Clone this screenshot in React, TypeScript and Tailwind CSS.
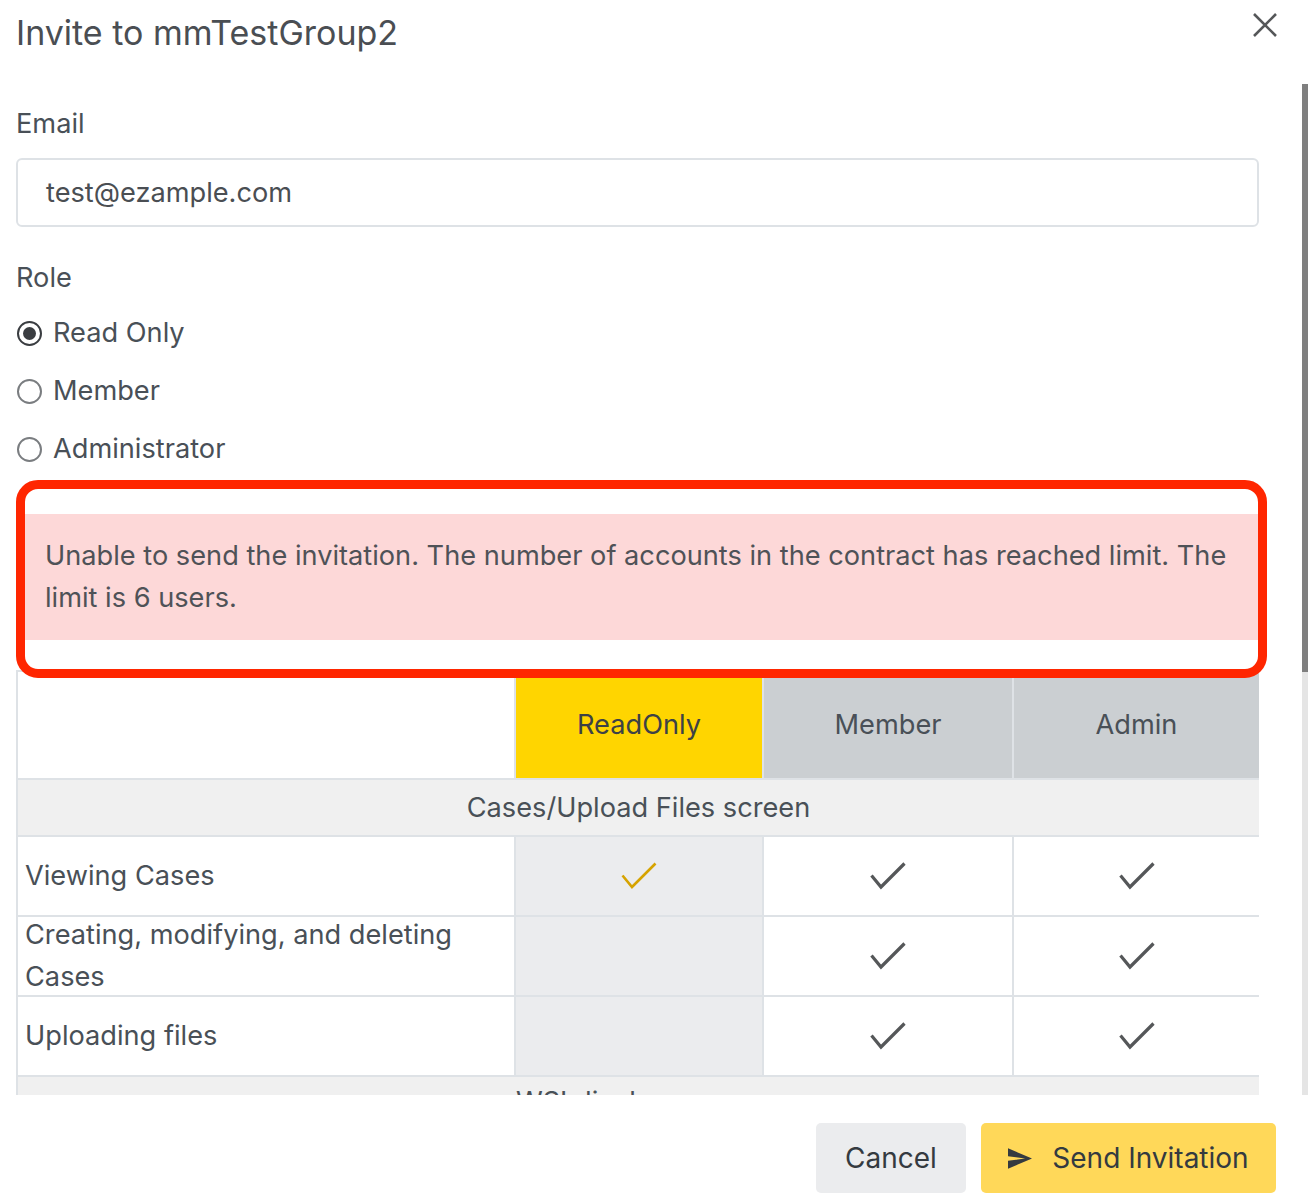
import React from "react";

const roles = [
  { label: "Read Only", checked: true },
  { label: "Member", checked: false },
  { label: "Administrator", checked: false },
];

const rows = [
  { name: ["Creating, modifying, and deleting", "Cases"], ro: false },
];

function Check({ yellow = false }: { yellow?: boolean }) {
  return (
    <svg width="36" height="28" viewBox="0 0 36 28" className="mx-auto block">
      <polyline
        points="1.5,13.5 11,25 34.5,1.5"
        fill="none"
        stroke={yellow ? "#d6a300" : "#555759"}
        strokeWidth={yellow ? 2.6 : 3.2}
      />
    </svg>
  );
}

function Radio({ checked }: { checked: boolean }) {
  return (
    <span
      className={
        "flex h-[25px] w-[25px] items-center justify-center rounded-full border-2 bg-white " +
        (checked ? "border-[#3a3d41]" : "border-[#7a7d80]")
      }
    >
      {checked && <span className="h-[13px] w-[13px] rounded-full bg-[#3a3d41]" />}
    </span>
  );
}

function PermRow({ label, ro }: { label: React.ReactNode; ro: boolean }) {
  return (
    <tr className="h-[80px]">
      <td className="border-2 border-[#dee2e6] p-0 px-[7px] align-middle">
        <div className="-my-[4px] leading-[42px]">{label}</div>
      </td>
      <td className="border-2 border-[#dee2e6] bg-[#ebecee] p-0 align-middle">{ro && <Check yellow />}</td>
      <td className="border-2 border-[#dee2e6] p-0 align-middle"><Check /></td>
      <td className="border-2 border-[#dee2e6] p-0 align-middle"><Check /></td>
    </tr>
  );
}

export default function App() {
  return (
    <div className="relative flex h-[1204px] w-[1308px] flex-col overflow-hidden bg-white font-['Inter',sans-serif] text-[#495057]">
      {/* header */}
      <header className="flex h-[84px] shrink-0 items-start justify-between pl-[16px] pr-[31px]">
        <h1 className="pt-[13px] text-[34px] leading-[40px] font-normal text-[#4a4e53]">Invite to mmTestGroup2</h1>
        <button className="mt-[13px] text-[#555759]" aria-label="Close">
          <svg width="24" height="24" viewBox="0 0 24 24">
            <path d="M1 1 23 23M23 1 1 23" stroke="currentColor" strokeWidth="2.6" fill="none" />
          </svg>
        </button>
      </header>

      {/* scrolling body */}
      <div className="flex h-[1011px] shrink-0">
        <div className="ml-[16px] w-[1243px] overflow-hidden pt-[19px] text-[27.2px] leading-[42px]">
          <div className="mb-[13px]">Email</div>
          <div className="flex h-[69px] items-center rounded-[6px] border-2 border-[#dee2e6] px-[28px] text-[#4a4e53]">
            test@ezample.com
          </div>

          <div className="mt-[30px] mb-[5px]">Role</div>
          {roles.map((r) => (
            <label key={r.label} className="flex h-[58px] items-center gap-[11px] pl-[1px]">
              <Radio checked={r.checked} />
              <span>{r.label}</span>
            </label>
          ))}

          <div className="mt-[36px] whitespace-nowrap bg-[#fdd8d8] px-[29px] py-[21px] text-[#4f5257]">
            Unable to send the invitation. The number of accounts in the contract has reached limit. The
            <br />
            limit is 6 users.
          </div>

          <table className="mt-[30px] w-full table-fixed border-collapse">
            <colgroup>
              <col className="w-[498px]" />
              <col className="w-[248px]" />
              <col className="w-[250px]" />
              <col className="w-[247px]" />
            </colgroup>
            <thead>
              <tr className="h-[108px] text-center">
                <th className="border-2 border-[#dee2e6] p-0 font-normal" />
                <th className="border-2 border-[#dee2e6] bg-[#ffd500] p-0 font-normal text-[#3d4146]">ReadOnly</th>
                <th className="border-2 border-[#dee2e6] bg-[#cbcfd2] p-0 font-normal">Member</th>
                <th className="border-2 border-[#dee2e6] bg-[#cbcfd2] p-0 font-normal">Admin</th>
              </tr>
            </thead>
            <tbody>
              <tr className="h-[57px] bg-[#f0f0f0] text-center">
                <td colSpan={4} className="border-2 border-[#dee2e6] p-0">Cases/Upload Files screen</td>
              </tr>
              <PermRow label="Viewing Cases" ro />
              {rows.map((r) => (
                <PermRow key={r.name[0]} label={<>{r.name[0]}<br />{r.name[1]}</>} ro={r.ro} />
              ))}
              <PermRow label="Uploading files" ro={false} />
              <tr className="h-[57px] bg-[#f0f0f0] text-center">
                <td colSpan={4} className="border-2 border-[#dee2e6] p-0 pt-[4px] align-top">WSI display screen</td>
              </tr>
            </tbody>
          </table>
        </div>
        <div className="flex-1" />
        <div className="flex w-[6px] flex-col bg-[#e5e5e5]">
          <div className="h-[588px] bg-[#7f7f7f]" />
        </div>
      </div>

      {/* footer */}
      <footer className="flex flex-1 items-start justify-end gap-[15px] pr-[32px] pt-[28px] text-[28px]">
        <button className="flex h-[70px] w-[150px] items-center justify-center rounded-[5px] bg-[#ebecee] text-[#343a40]">
          Cancel
        </button>
        <button className="flex h-[70px] w-[295px] items-center justify-center gap-[20px] rounded-[5px] bg-[#ffd859] text-[#343a40]">
          <svg width="24" height="21" viewBox="2 3 21 18">
            <path d="M2.01 21 23 12 2.01 3 2 10l15 2-15 2z" fill="#343a40" />
          </svg>
          Send Invitation
        </button>
      </footer>

      {/* red annotation outline */}
      <div className="pointer-events-none absolute left-[16px] top-[480px] h-[198px] w-[1251px] rounded-[22px] border-[9px] border-[#ff2600]" />
    </div>
  );
}
